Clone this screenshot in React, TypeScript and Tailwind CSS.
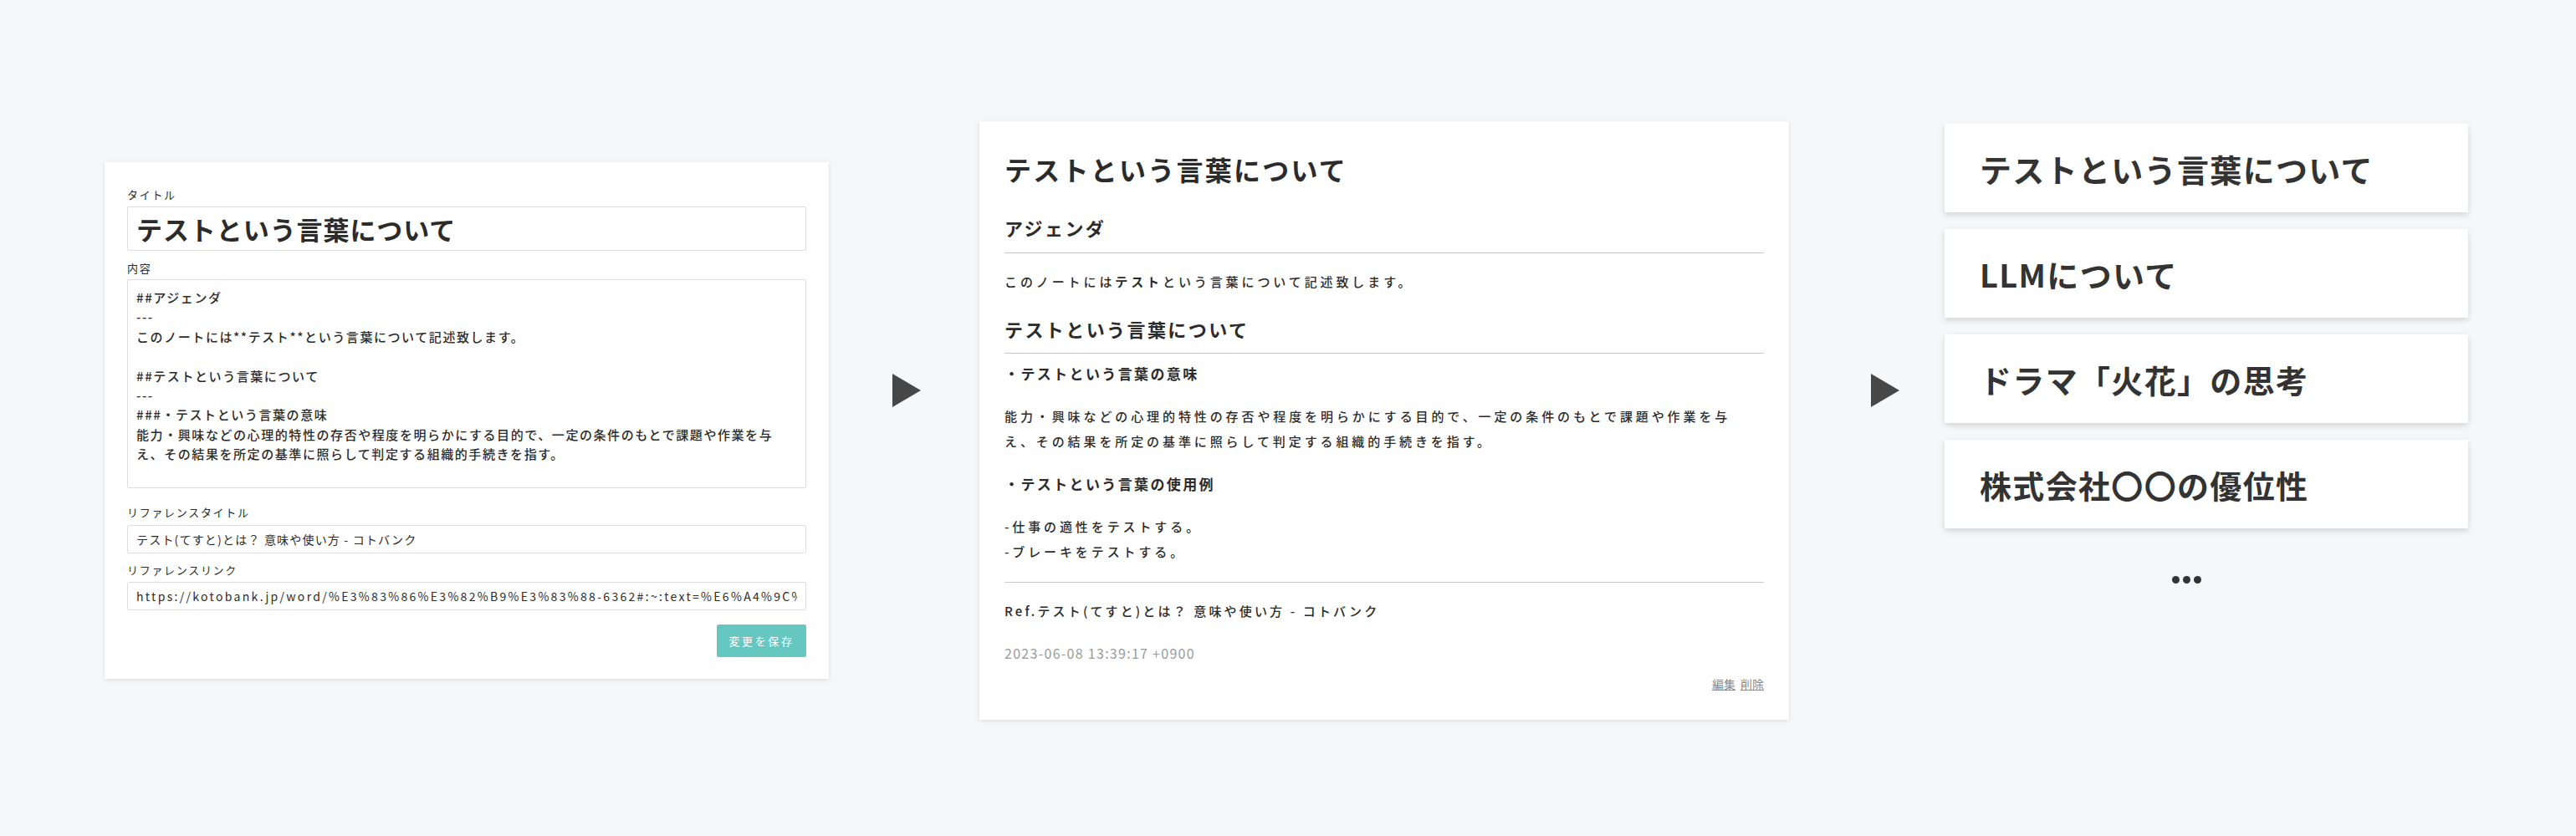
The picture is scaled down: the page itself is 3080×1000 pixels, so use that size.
import type { ReactNode } from "react";

const TEXTAREA_LINES = [
  "##アジェンダ",
  "---",
  "このノートには**テスト**という言葉について記述致します。",
  "",
  "##テストという言葉について",
  "---",
  "###・テストという言葉の意味",
  "能力・興味などの心理的特性の存否や程度を明らかにする目的で、一定の条件のもとで課題や作業を与",
  "え、その結果を所定の基準に照らして判定する組織的手続きを指す。",
];

const NOTES = [
  "テストという言葉について",
  "LLMについて",
  "ドラマ「火花」の思考",
  "株式会社〇〇の優位性",
];

function Arrow({ className }: { className: string }) {
  return (
    <div className={`mt-[447px] shrink-0 ${className}`}>
      <svg width="34" height="40" viewBox="0 0 34 40">
        <polygon points="0,0 34,20 0,40" fill="#474747" />
      </svg>
    </div>
  );
}

function Label({ children, className = "" }: { children: ReactNode; className?: string }) {
  return (
    <div className={`text-[13px] leading-[16px] font-normal tracking-[0.13em] text-[#2b2b2b] ${className}`}>
      {children}
    </div>
  );
}

function EditCard() {
  return (
    <div className="mt-[194px] w-[866px] shrink-0 bg-white px-[27px] pt-[31px] pb-[26px] shadow-[0_1px_5px_rgba(0,0,0,0.12)]">
      <Label>タイトル</Label>
      <input
        readOnly
        defaultValue="テストという言葉について"
        className="mt-1.5 block h-[53px] w-full rounded-[2px] border border-[#dedede] px-[10px] text-[31px] font-bold tracking-[0.03em] text-[#2b2b2b] outline-none"
      />
      <Label className="mt-[13px]">内容</Label>
      <div className="mt-[5px] h-[250px] rounded-[2px] border border-[#dedede] px-[10px] pt-[9px] text-[15px] leading-[23.4px] tracking-[0.105em] text-[#2b2b2b]">
        {TEXTAREA_LINES.map((line, i) => (
          <div key={i} className="h-[23.4px] whitespace-pre">
            {line}
          </div>
        ))}
      </div>
      <Label className="mt-[21px]">リファレンスタイトル</Label>
      <input
        readOnly
        defaultValue="テスト(てすと)とは？ 意味や使い方 - コトバンク"
        className="mt-[7px] block h-[34px] w-full rounded-[2px] border border-[#dedede] px-[10px] text-[14px] font-normal tracking-[0.085em] text-[#2b2b2b] outline-none"
      />
      <Label className="mt-[12px]">リファレンスリンク</Label>
      <input
        readOnly
        defaultValue="https://kotobank.jp/word/%E3%83%86%E3%82%B9%E3%83%88-6362#:~:text=%E6%A4%9C%E6%9F%BB"
        className="mt-1.5 block h-[34px] w-full rounded-[2px] border border-[#dedede] px-[10px] text-[14px] font-normal tracking-[0.165em] text-[#2b2b2b] outline-none"
      />
      <div className="mt-[17px] flex justify-end">
        <button className="h-[39px] w-[107px] rounded-[2px] bg-[#66c7c1] text-[13px] font-normal tracking-[0.2em] text-white">
          変更を保存
        </button>
      </div>
    </div>
  );
}

function NoteCard() {
  return (
    <div className="mt-[145px] ml-[70px] w-[968px] shrink-0 bg-white px-[30px] pt-[37px] pb-[33px] text-[#2b2b2b] shadow-[0_1px_5px_rgba(0,0,0,0.12)]">
      <h1 className="text-[32px] leading-[40px] font-bold tracking-[0.07em]">テストという言葉について</h1>
      <h2 className="mt-[34px] text-[22px] leading-[32px] font-bold tracking-[0.11em]">アジェンダ</h2>
      <hr className="mt-[14px] border-t border-[#c9c9c9]" />
      <p className="mt-[19px] text-[15px] leading-[30px] tracking-[0.26em]">
        このノートには<b className="font-bold">テスト</b>という言葉について記述致します。
      </p>
      <h2 className="mt-[25px] text-[22px] leading-[32px] font-bold tracking-[0.11em]">テストという言葉について</h2>
      <hr className="mt-[13px] border-t border-[#c9c9c9]" />
      <h3 className="mt-[11px] text-[17px] leading-[26px] font-bold tracking-[0.14em]">・テストという言葉の意味</h3>
      <p className="mt-[23px] text-[15px] leading-[30px] tracking-[0.26em]">
        能力・興味などの心理的特性の存否や程度を明らかにする目的で、一定の条件のもとで課題や作業を与
        <br />
        え、その結果を所定の基準に照らして判定する組織的手続きを指す。
      </p>
      <h3 className="mt-[23px] text-[17px] leading-[26px] font-bold tracking-[0.14em]">・テストという言葉の使用例</h3>
      <p className="mt-[23px] text-[15px] leading-[30px] tracking-[0.26em]">
        -仕事の適性をテストする。
        <br />
        -ブレーキをテストする。
      </p>
      <hr className="mt-[21px] border-t border-[#c9c9c9]" />
      <p className="mt-[19px] text-[15px] leading-[30px] tracking-[0.21em]">
        Ref.テスト(てすと)とは？ 意味や使い方 - コトバンク
      </p>
      <p className="mt-[23px] text-[16px] leading-[24px] font-normal tracking-[0.08em] text-[#9a9a9a]">2023-06-08 13:39:17 +0900</p>
      <div className="mt-[15px] flex justify-end gap-[6px] text-[14px] leading-[20px] font-normal text-[#8a8a8a]">
        <a className="underline">編集</a>
        <a className="underline">削除</a>
      </div>
    </div>
  );
}

function NoteList() {
  return (
    <div className="mt-[148px] ml-[54px] flex w-[626px] shrink-0 flex-col gap-5">
      {NOTES.map((title) => (
        <div
          key={title}
          className="flex h-[106px] items-center bg-white pl-[42px] text-[38px] font-bold tracking-[0.035em] text-[#333] shadow-[0_3px_7px_rgba(0,0,0,0.14)]"
        >
          {title}
        </div>
      ))}
      <div className="mt-[37px] flex gap-1 pl-[272px]">
        <span className="h-[9px] w-[9px] rounded-full bg-[#333]" />
        <span className="h-[9px] w-[9px] rounded-full bg-[#333]" />
        <span className="h-[9px] w-[9px] rounded-full bg-[#333]" />
      </div>
    </div>
  );
}

export default function App() {
  return (
    <div className="flex h-[1000px] w-[3080px] items-start bg-[#f6f7f9] pl-[125px] font-['Noto_Sans_CJK_JP','Noto_Sans',sans-serif] font-medium text-[#2b2b2b]">
      <EditCard />
      <Arrow className="ml-[76px]" />
      <NoteCard />
      <Arrow className="ml-[98px]" />
      <NoteList />
    </div>
  );
}
